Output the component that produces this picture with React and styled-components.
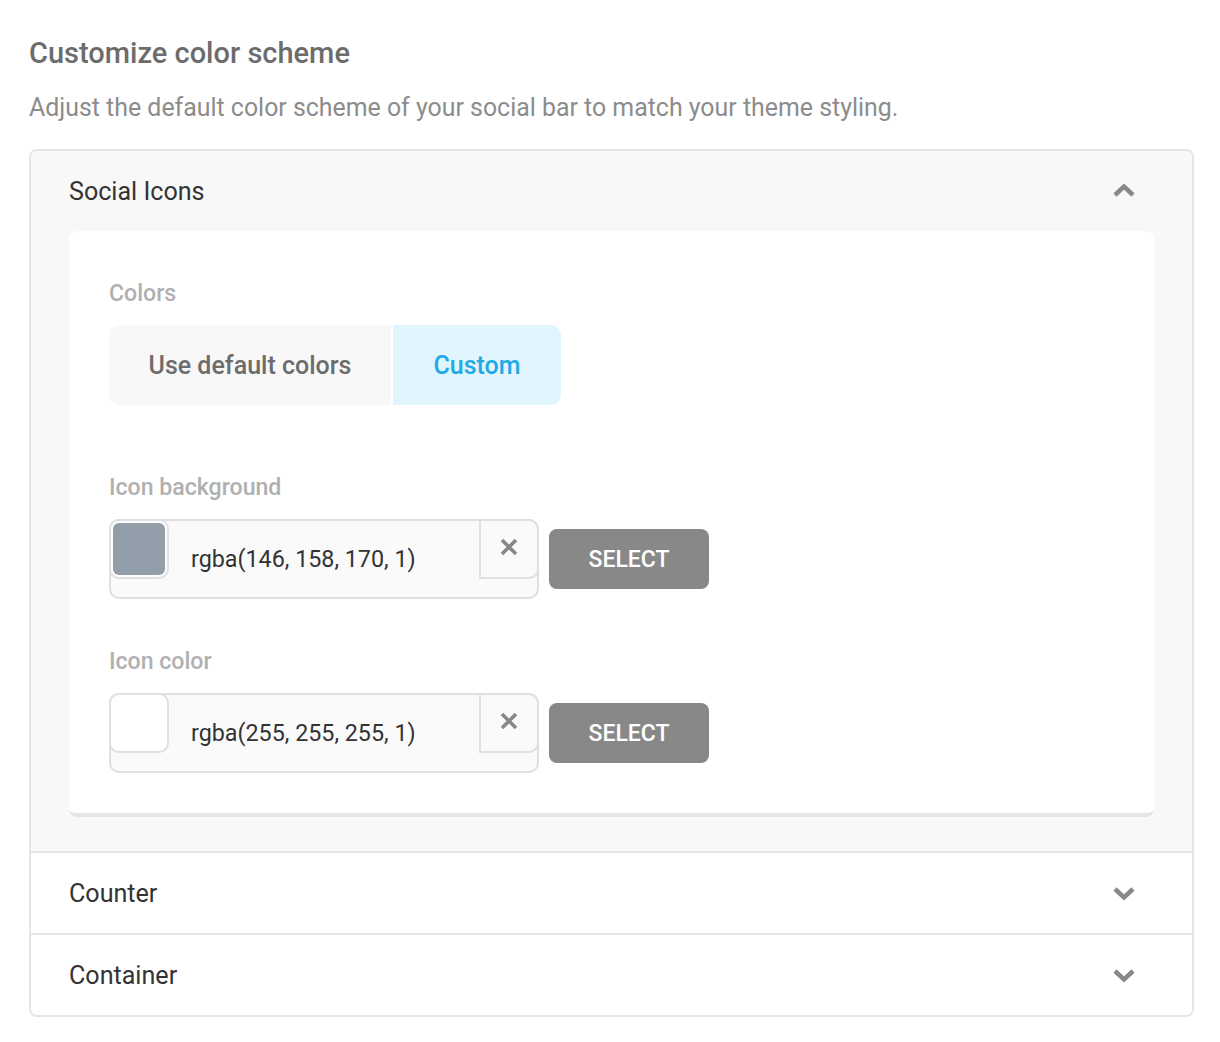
import React from 'react';
import styled, { createGlobalStyle } from 'styled-components';

const GlobalStyle = createGlobalStyle`
  * {
    box-sizing: border-box;
  }

  body {
    margin: 0;
    background: #fff;
    font-family: Roboto, "Liberation Sans", sans-serif;
  }
`;

const Page = styled.div`
  width: 1220px;
  height: 1042px;
  padding: 36px 26px 0 29px;
`;

const Title = styled.h2`
  margin: 0;
  font-size: 29px;
  line-height: 34px;
  font-weight: 500;
  color: #6c6c6c;
`;

const Lead = styled.p`
  margin: 21px 0 24px;
  font-size: 24.9px;
  line-height: 34px;
  font-weight: 400;
  color: #8c8c8c;
`;

const Accordion = styled.div`
  border: 2px solid #e5e5e5;
  border-radius: 8px;
  overflow: hidden;
`;

const Section = styled.section`
  background: ${props => (props.$open ? '#f8f8f8' : '#fff')};
  padding: ${props => (props.$open ? '0 38px 34px' : '0 38px')};

  & + & {
    border-top: 2px solid #e5e5e5;
  }
`;

const SectionHead = styled.div`
  display: flex;
  align-items: center;
  justify-content: space-between;
  height: 80px;
`;

const SectionTitle = styled.h3`
  margin: 0;
  font-size: 25.1px;
  font-weight: 400;
  color: #333;
`;

const Chevron = styled.svg`
  width: 24px;
  height: 16px;
  margin: ${props => (props.$up ? '-2px' : '2px')} 18px 0 0;
  fill: none;
  stroke: #888;
  stroke-width: 4.5;
`;

const Card = styled.div`
  background: #fff;
  border-bottom: 4px solid #e5e5e5;
  border-radius: 8px;
  padding: 47px 40px 40px;
`;

const Label = styled.div`
  font-size: 23.1px;
  line-height: 32px;
  font-weight: 500;
  color: #b0b0b0;
  margin-bottom: 15px;
`;

const Toggle = styled.div`
  display: flex;
  gap: 2px;
  height: 80px;
  margin-bottom: 67px;
`;

const ToggleOption = styled.div`
  display: flex;
  align-items: center;
  justify-content: center;
  width: ${props => (props.$active ? '168px' : '282px')};
  font-size: 25px;
  font-weight: 500;
  color: ${props => (props.$active ? '#1eaae7' : '#6c6c6c')};
  background: ${props => (props.$active ? '#e1f5fe' : '#f8f8f8')};
  border-radius: ${props => (props.$active ? '0 10px 10px 0' : '10px 0 0 10px')};
`;

const Field = styled.div`
  margin-bottom: 47px;

  &:last-child {
    margin-bottom: 0;
  }
`;

const FieldRow = styled.div`
  display: flex;
  align-items: center;
  gap: 10px;
`;

const ColorInput = styled.div`
  display: flex;
  align-items: flex-start;
  width: 430px;
  height: 80px;
  background: #fafafa;
  border: 2px solid #e0e0e0;
  border-radius: 10px;
`;

const Swatch = styled.div`
  flex: none;
  width: 60px;
  height: 60px;
  margin: -2px 0 0 -2px;
  padding: 2px;
  background: #fff;
  border: 2px solid #e0e0e0;
  border-radius: 10px;
`;

const SwatchFill = styled.div`
  width: 100%;
  height: 100%;
  border-radius: 6px;
  background: ${props => props.color};
`;

const ColorValue = styled.div`
  flex: 1;
  align-self: center;
  padding-left: 22px;
  font-size: 23.3px;
  color: #333;
`;

const ClearButton = styled.div`
  flex: none;
  display: flex;
  align-items: center;
  justify-content: center;
  width: 60px;
  height: 60px;
  margin: -2px -2px 0 0;
  padding-bottom: 4px;
  border: 2px solid #e0e0e0;
  border-radius: 0 10px 10px 0;
`;

const ClearIcon = styled.svg`
  width: 18px;
  height: 18px;
  fill: none;
  stroke: #888;
  stroke-width: 3.6;
`;

const SelectButton = styled.button`
  width: 160px;
  height: 60px;
  padding: 0;
  border: 0;
  border-radius: 8px;
  background: #888;
  color: #fff;
  font-family: inherit;
  font-size: 23px;
  font-weight: 500;
`;

function ChevronIcon({ up }) {
  return (
    <Chevron $up={up} viewBox="0 0 24 16">
      <path d={up ? 'M3 13 12 4.500 21 13' : 'M3 3 12 11.500 21 3'} />
    </Chevron>
  );
}

function ColorField({ label, value, color }) {
  return (
    <Field>
      <Label>{label}</Label>
      <FieldRow>
        <ColorInput>
          <Swatch>
            <SwatchFill color={color} />
          </Swatch>
          <ColorValue>{value}</ColorValue>
          <ClearButton>
            <ClearIcon viewBox="0 0 18 18">
              <path d="M2 2 16 16M16 2 2 16" />
            </ClearIcon>
          </ClearButton>
        </ColorInput>
        <SelectButton>SELECT</SelectButton>
      </FieldRow>
    </Field>
  );
}

export default function App() {
  return (
    <Page>
      <GlobalStyle />
      <Title>Customize color scheme</Title>
      <Lead>Adjust the default color scheme of your social bar to match your theme styling.</Lead>
      <Accordion>
        <Section $open>
          <SectionHead>
            <SectionTitle>Social Icons</SectionTitle>
            <ChevronIcon up />
          </SectionHead>
          <Card>
            <Label>Colors</Label>
            <Toggle>
              <ToggleOption>Use default colors</ToggleOption>
              <ToggleOption $active>Custom</ToggleOption>
            </Toggle>
            <ColorField label="Icon background" value="rgba(146, 158, 170, 1)" color="#929eaa" />
            <ColorField label="Icon color" value="rgba(255, 255, 255, 1)" color="#fff" />
          </Card>
        </Section>
        <Section>
          <SectionHead>
            <SectionTitle>Counter</SectionTitle>
            <ChevronIcon />
          </SectionHead>
        </Section>
        <Section>
          <SectionHead>
            <SectionTitle>Container</SectionTitle>
            <ChevronIcon />
          </SectionHead>
        </Section>
      </Accordion>
    </Page>
  );
}
